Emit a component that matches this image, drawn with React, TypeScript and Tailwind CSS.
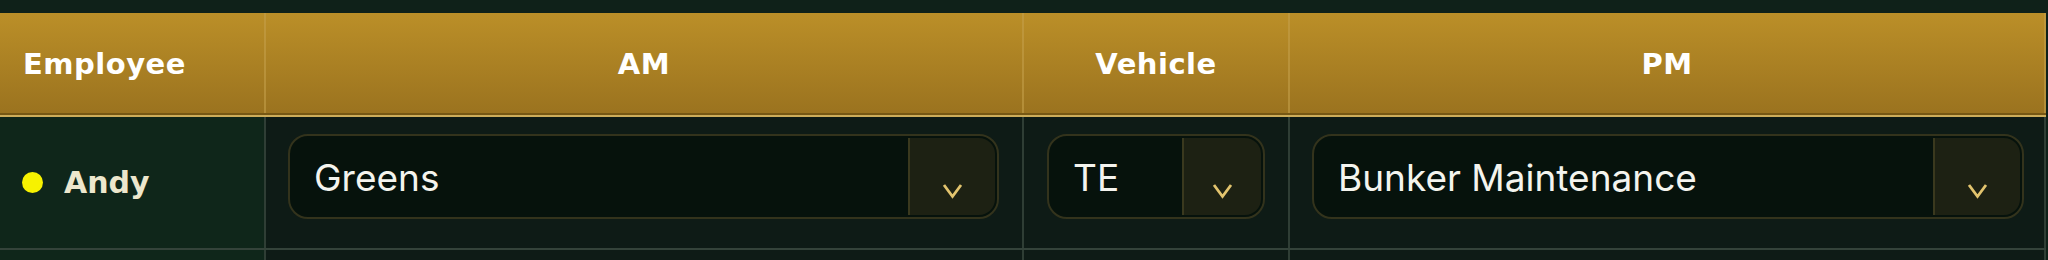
import React from "react";

function Chevron() {
  return (
    <svg width="21" height="16" viewBox="0 0 21 16" fill="none">
      <polyline points="2,2 10.5,13.5 19,2" stroke="#e2c46e" strokeWidth="2.8" strokeLinejoin="miter" />
    </svg>
  );
}

function Dropdown({ value, chevronW }: { value: string; chevronW: string }) {
  return (
    <div className="flex h-[85px] w-full rounded-[20px] border-[2px] border-[#33331c] bg-[#06120c] p-[2px]">
      <div className="flex flex-1 items-center pl-[22px] pt-[3px] text-[37px] text-[#f4f4ee] [font-family:'Inter',sans-serif]">
        {value}
      </div>
      <div className={`${chevronW} flex justify-center rounded-r-[16px] border-l-[2px] border-[#3a391e] bg-[#1d2113] pt-[45px]`}>
        <Chevron />
      </div>
    </div>
  );
}

export default function App() {
  const headCell =
    "flex h-[100px] items-center border-r-[2px] border-[#c39f4a]/60 pt-[4px] text-[29px] font-bold tracking-[0.5px] text-white [font-family:'DejaVu_Sans',sans-serif]";
  return (
    <div className="h-[260px] w-[2048px] overflow-hidden bg-[#0f2119] pt-[13px] [font-family:'Liberation_Sans',Arial,sans-serif]">
      <div className="w-[2046px]">
        {/* header */}
        <div className="grid grid-cols-[266px_758px_266px_756px] border-b-[2px] border-[#765713] bg-gradient-to-b from-[#bb8f28] to-[#9b731f]">
          <div className={`${headCell} pl-[23px]`}>Employee</div>
          <div className={`${headCell} justify-center`}>AM</div>
          <div className={`${headCell} justify-center`}>Vehicle</div>
          <div className={`${headCell} justify-center`}>PM</div>
        </div>
        <div className="h-[2px] bg-[#cdad5a]" />
        {/* row */}
        <div className="grid grid-cols-[266px_758px_266px_756px] border-b-[2px] border-[#34433a]">
          <div className="flex h-[131px] items-center border-r-[2px] border-[#2f3e35] bg-[#0f261a] pl-[22px]">
            <span className="h-[21px] w-[21px] rounded-full bg-[#f7f200]" />
            <span className="ml-[21px] text-[30px] font-bold text-[#ede7cd] [font-family:'DejaVu_Sans',sans-serif]">Andy</span>
          </div>
          <div className="flex h-[131px] items-start border-r-[2px] border-[#2f3e35] bg-[#0e1b16] pl-[22px] pr-[23px] pt-[17px]">
            <Dropdown value="Greens" chevronW="w-[87px]" />
          </div>
          <div className="flex h-[131px] items-start border-r-[2px] border-[#2f3e35] bg-[#0e1b16] pl-[23px] pr-[23px] pt-[17px]">
            <Dropdown value="TE" chevronW="w-[79px]" />
          </div>
          <div className="flex h-[131px] items-start border-r-[2px] border-[#2f3e35] bg-[#0e1b16] pl-[22px] pr-[20px] pt-[17px]">
            <Dropdown value="Bunker Maintenance" chevronW="w-[87px]" />
          </div>
        </div>
        {/* next row (partially visible) */}
        <div className="grid h-[20px] grid-cols-[266px_758px_266px_756px]">
          <div className="border-r-[2px] border-[#2f3e35] bg-[#0f261a]" />
          <div className="border-r-[2px] border-[#2f3e35] bg-[#0e1b16]" />
          <div className="border-r-[2px] border-[#2f3e35] bg-[#0e1b16]" />
          <div className="border-r-[2px] border-[#2f3e35] bg-[#0e1b16]" />
        </div>
      </div>
    </div>
  );
}
